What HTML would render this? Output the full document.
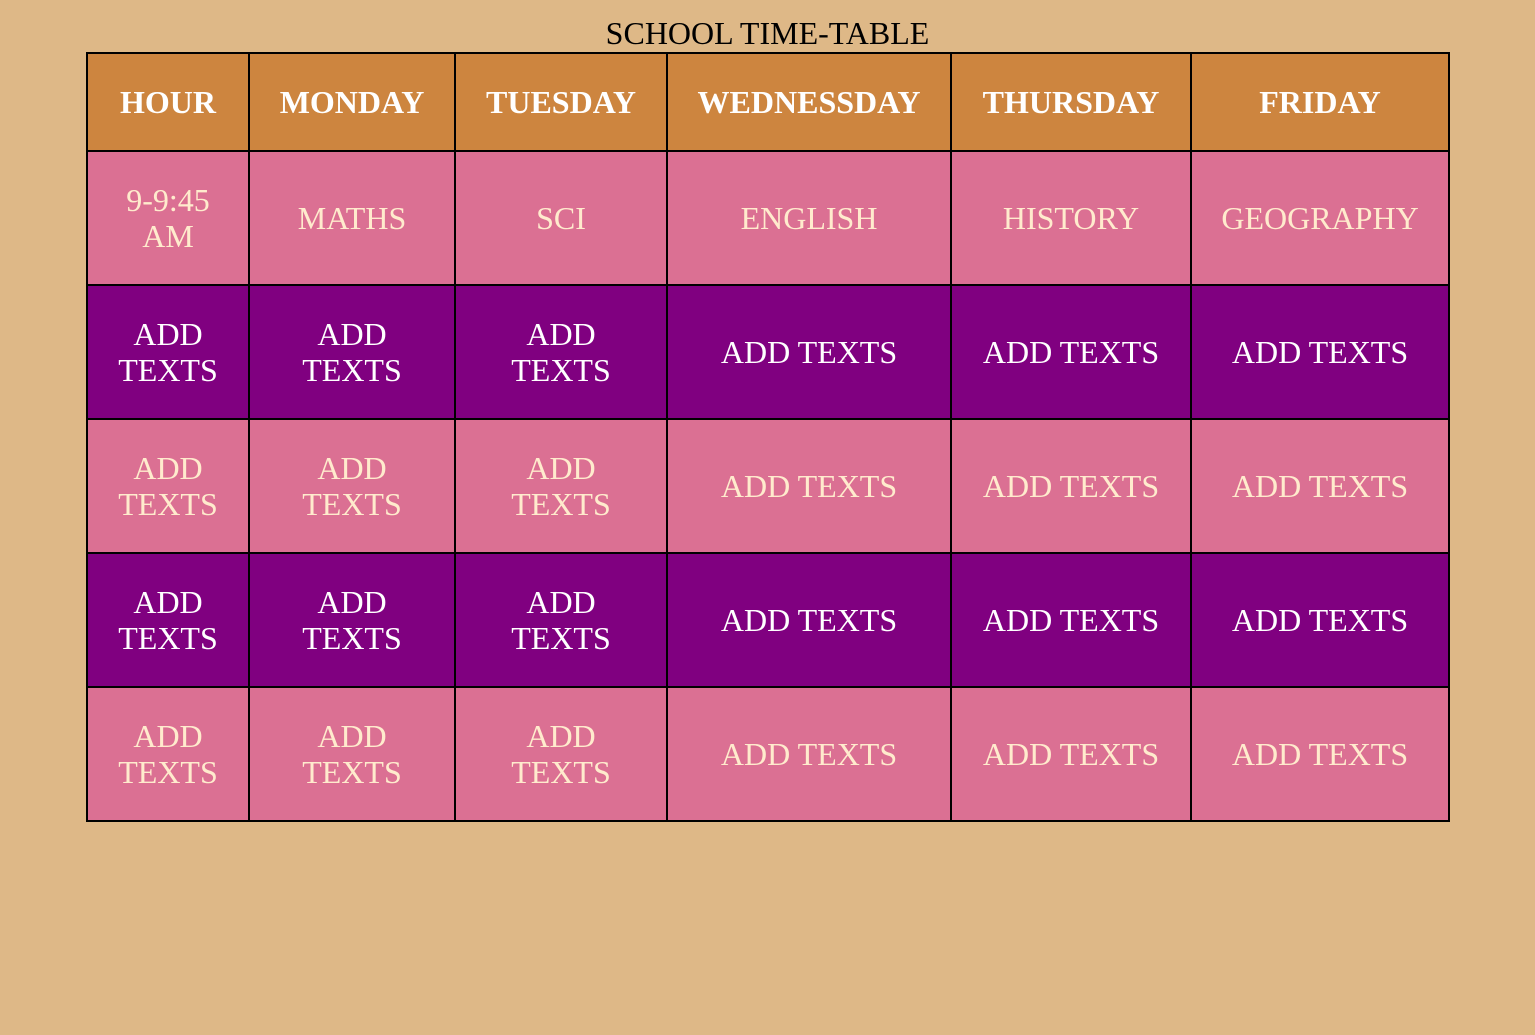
<!DOCTYPE html>
<html><head><style>
html,body{margin:0;padding:0;background:#DEB887;}
body{width:1535px;height:1035px;font-family:"Liberation Serif",serif;}
h1{margin:0;position:absolute;top:15px;left:0;width:1535px;text-align:center;font-weight:normal;font-size:32px;line-height:36px;color:#000;}
table{position:absolute;left:86px;top:52px;border-collapse:collapse;table-layout:fixed;width:1362px;}
td,th{border:2px solid #000;text-align:center;font-size:32px;line-height:36px;padding:0;}
th{background:#CD853F;color:#fff;height:96px;font-weight:bold;}
td{height:132px;}
tr.p td{background:#DB7093;color:#FFEBCD;}
tr.v td{background:#800080;color:#fff;}
</style></head><body>
<h1>SCHOOL TIME-TABLE</h1>
<table>
<colgroup><col style="width:162px"><col style="width:206px"><col style="width:212px"><col style="width:284px"><col style="width:240px"><col style="width:258px"></colgroup>
<tr><th>HOUR</th><th>MONDAY</th><th>TUESDAY</th><th>WEDNESSDAY</th><th>THURSDAY</th><th>FRIDAY</th></tr>
<tr class="p"><td>9-9:45<br>AM</td><td>MATHS</td><td>SCI</td><td>ENGLISH</td><td>HISTORY</td><td>GEOGRAPHY</td></tr>
<tr class="v"><td>ADD<br>TEXTS</td><td>ADD<br>TEXTS</td><td>ADD<br>TEXTS</td><td>ADD TEXTS</td><td>ADD TEXTS</td><td>ADD TEXTS</td></tr>
<tr class="p"><td>ADD<br>TEXTS</td><td>ADD<br>TEXTS</td><td>ADD<br>TEXTS</td><td>ADD TEXTS</td><td>ADD TEXTS</td><td>ADD TEXTS</td></tr>
<tr class="v"><td>ADD<br>TEXTS</td><td>ADD<br>TEXTS</td><td>ADD<br>TEXTS</td><td>ADD TEXTS</td><td>ADD TEXTS</td><td>ADD TEXTS</td></tr>
<tr class="p"><td>ADD<br>TEXTS</td><td>ADD<br>TEXTS</td><td>ADD<br>TEXTS</td><td>ADD TEXTS</td><td>ADD TEXTS</td><td>ADD TEXTS</td></tr>
</table>
</body></html>
